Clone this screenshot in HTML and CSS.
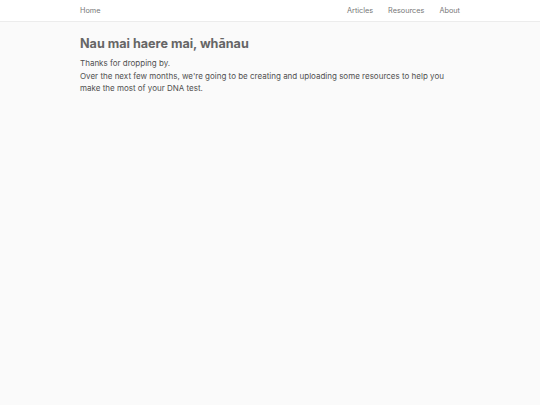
FILE: index.html
```html
<!DOCTYPE html>
<html lang="en">
<head>
<meta charset="utf-8">
<title>Whānau</title>
<link rel="stylesheet" href="styles.css">
</head>
<body>
<header class="site-header">
  <nav class="nav">
    <a class="nav-link" href="#">Home</a>
    <div class="nav-right">
      <a class="nav-link" href="#">Articles</a>
      <a class="nav-link" href="#">Resources</a>
      <a class="nav-link" href="#">About</a>
    </div>
  </nav>
</header>
<main class="main">
  <h1 class="title">Nau mai haere mai, whānau</h1>
  <p class="text">Thanks for dropping by.<br>Over the next few months, we're going to be creating and uploading some resources to help you make the most of your DNA test.</p>
</main>
</body>
</html>
```
FILE: styles.css
```css
html, body {
  margin: 0;
  padding: 0;
  background: #fafafa;
  font-family: Inter, "Liberation Sans", sans-serif;
  color: #4a4a4a;
}
.site-header {
  background: #fff;
  border-bottom: 1px solid #ececec;
}
.nav {
  width: 380px;
  margin: 0 auto;
  height: 21px;
  display: flex;
  align-items: center;
  justify-content: space-between;
}
.nav-right {
  display: flex;
  gap: 15px;
}
.nav-link {
  font-size: 7.3px;
  color: #777;
  text-decoration: none;
}
.main {
  width: 380px;
  margin: 0 auto;
  padding-top: 14px;
}
.title {
  margin: 0 0 6px;
  font-size: 12.6px;
  font-weight: 700;
  color: #666;
}
.text {
  margin: 0;
  font-size: 8px;
  line-height: 12.5px;
  color: #505050;
}
```
